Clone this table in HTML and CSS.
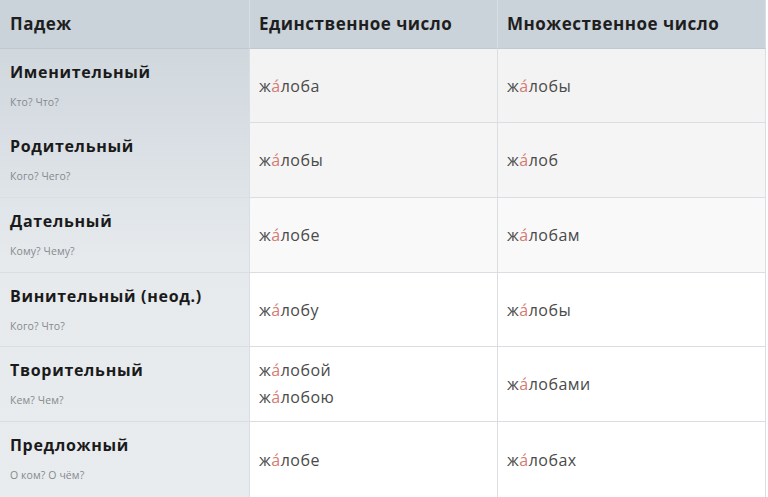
FILE: index.html
```html
<!DOCTYPE html>
<html lang="ru">
<head>
<meta charset="utf-8">
<link rel="stylesheet" href="styles.css">
</head>
<body>
<div class="table">
  <div class="cell head first">Падеж</div>
  <div class="cell head">Единственное число</div>
  <div class="cell head">Множественное число</div>

  <div class="cell case r1"><div class="name">Именительный</div><div class="q">Кто? Что?</div></div>
  <div class="cell val r1">ж<span class="acc">а́</span>лоба</div>
  <div class="cell val r1">ж<span class="acc">а́</span>лобы</div>

  <div class="cell case r2"><div class="name">Родительный</div><div class="q">Кого? Чего?</div></div>
  <div class="cell val r2">ж<span class="acc">а́</span>лобы</div>
  <div class="cell val r2">ж<span class="acc">а́</span>лоб</div>

  <div class="cell case r3"><div class="name">Дательный</div><div class="q">Кому? Чему?</div></div>
  <div class="cell val r3">ж<span class="acc">а́</span>лобе</div>
  <div class="cell val r3">ж<span class="acc">а́</span>лобам</div>

  <div class="cell case"><div class="name">Винительный (неод.)</div><div class="q">Кого? Что?</div></div>
  <div class="cell val">ж<span class="acc">а́</span>лобу</div>
  <div class="cell val">ж<span class="acc">а́</span>лобы</div>

  <div class="cell case"><div class="name">Творительный</div><div class="q">Кем? Чем?</div></div>
  <div class="cell val multi"><div>ж<span class="acc">а́</span>лобой</div><div>ж<span class="acc">а́</span>лобою</div></div>
  <div class="cell val">ж<span class="acc">а́</span>лобами</div>

  <div class="cell case last"><div class="name">Предложный</div><div class="q">О ком? О чём?</div></div>
  <div class="cell val last">ж<span class="acc">а́</span>лобе</div>
  <div class="cell val last">ж<span class="acc">а́</span>лобах</div>
</div>
</body>
</html>
```

FILE: styles.css
```css
html, body {
  margin: 0;
  padding: 0;
  background: #ffffff;
}
body {
  font-family: "Open Sans", "Liberation Sans", sans-serif;
  color: #222;
  width: 768px;
  height: 497px;
  overflow: hidden;
}
.table {
  display: grid;
  grid-template-columns: 250px 248px 268px;
  grid-template-rows: 49px 74px 75px 75px 74px 75px 75px;
  width: 766px;
}
.cell {
  border-right: 1px solid #dadee2;
  border-bottom: 1px solid #dadee2;
  box-sizing: border-box;
}
.head {
  background: #cad2da;
  font-weight: 700;
  font-size: 17px;
  letter-spacing: 0.5px;
  color: #1e1e1e;
  display: flex;
  align-items: center;
  padding-left: 9px;
  padding-bottom: 2px;
  border-bottom-color: #c0c8d0;
}
.head.first {
  padding-left: 10px;
}
.case {
  background: linear-gradient(180deg, #cbd3da 0px, #d9dfe4 140px, #e6eaed 260px, #e9ecef 497px);
  background-attachment: fixed;
  background-size: 250px 497px;
  padding: 12px 10px 0 10px;
}
.name {
  font-weight: 700;
  font-size: 16px;
  letter-spacing: 0.7px;
  line-height: 22px;
  color: #1a1a1a;
}
.q {
  font-size: 10.5px;
  color: #86898c;
  margin-top: 12px;
  line-height: 14px;
  letter-spacing: 0.1px;
}
.val {
  display: flex;
  align-items: center;
  padding-left: 9px;
  font-size: 16px;
  color: #4a4a4a;
  letter-spacing: 0.5px;
  background: #ffffff;
}
.val.r1 { background: #f3f3f3; }
.val.r2 { background: #f5f5f5; }
.val.r3 { background: #f9f9f9; }
.multi {
  flex-direction: column;
  align-items: flex-start;
  justify-content: center;
  line-height: 27px;
}
.acc {
  color: #d67b74;
}
.last {
  border-bottom: none;
}
```
